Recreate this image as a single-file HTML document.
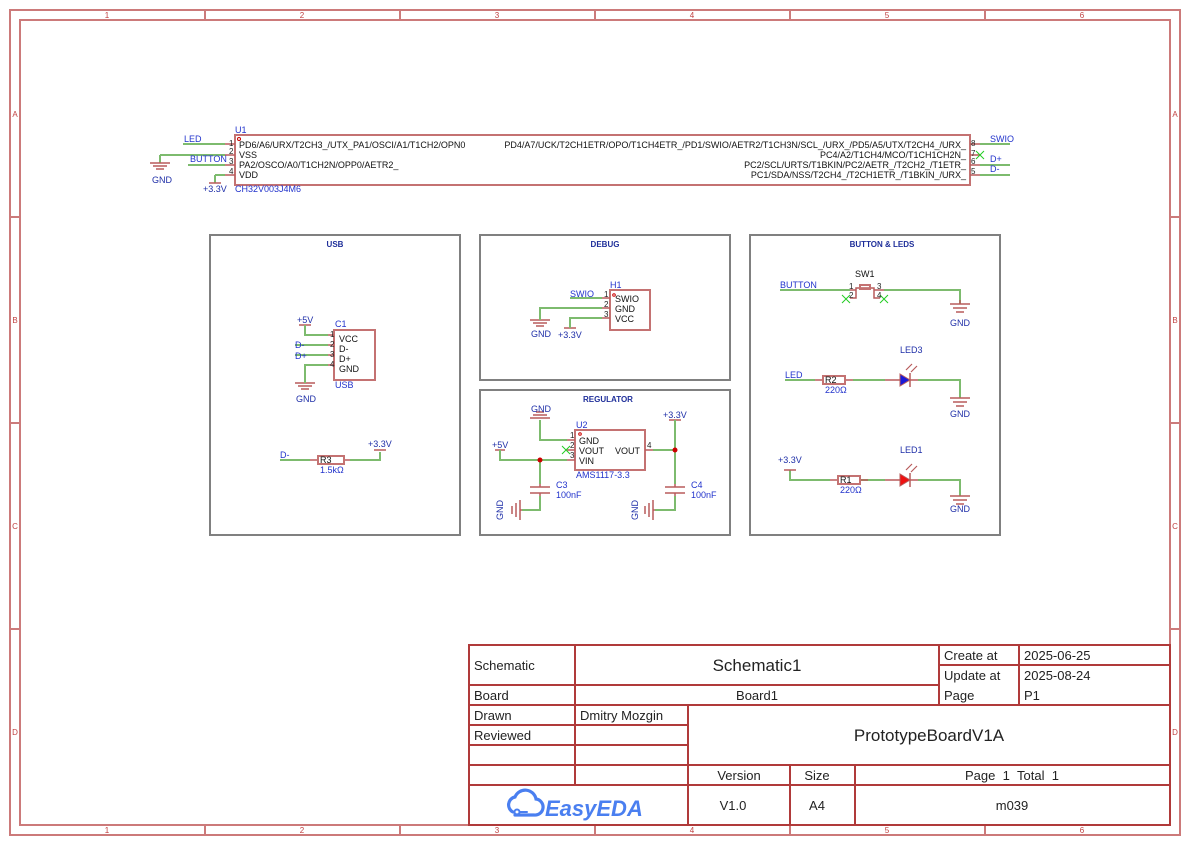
<!DOCTYPE html>
<html><head><meta charset="utf-8"><style>
html,body{margin:0;padding:0;background:#fff}
svg{display:block}
text{font-family:"Liberation Sans",Arial,sans-serif}
.w{stroke:#7dbb6e;stroke-width:2;fill:none}
.p{stroke:#b85c5c;stroke-width:1.5;fill:none}
.b{stroke:#c47272;stroke-width:2;fill:none}
.bl{fill:#2233cc;font-size:9px}
.nl{fill:#1f2fa8;font-size:9px}
.bk{fill:#111;font-size:9px}
.pn{fill:#222;font-size:8px}
.bx{stroke:#808080;stroke-width:2;fill:none}
.tt{fill:#1f2f9a;font-size:8px;font-weight:bold}
.fr{stroke:#cc7a7a;stroke-width:2;fill:none}
.tb{stroke:#b03a3a;stroke-width:2;fill:none}
.tk{fill:#c04040;font-size:8px}
.tbt{fill:#222;font-size:13px}
</style></head><body>
<svg width="1190" height="845" viewBox="0 0 1190 845" xmlns="http://www.w3.org/2000/svg">
<rect x="10" y="10" width="1170" height="825" class="fr"/>
<rect x="20" y="20" width="1150" height="805" class="fr"/>
<g class="fr">
<path d="M205 10V20M400 10V20M595 10V20M790 10V20M985 10V20M205 825V835M400 825V835M595 825V835M790 825V835M985 825V835"/>
<path d="M10 217H20M10 423H20M10 629H20M1170 217H1180M1170 423H1180M1170 629H1180"/>
</g>
<g class="tk" text-anchor="middle">
<text x="107" y="18">1</text><text x="302" y="18">2</text><text x="497" y="18">3</text><text x="692" y="18">4</text><text x="887" y="18">5</text><text x="1082" y="18">6</text>
<text x="107" y="833">1</text><text x="302" y="833">2</text><text x="497" y="833">3</text><text x="692" y="833">4</text><text x="887" y="833">5</text><text x="1082" y="833">6</text>
<text x="15" y="117">A</text><text x="15" y="323">B</text><text x="15" y="529">C</text><text x="15" y="735">D</text>
<text x="1175" y="117">A</text><text x="1175" y="323">B</text><text x="1175" y="529">C</text><text x="1175" y="735">D</text>
</g>

<rect x="235" y="135" width="735" height="50" class="b"/>
<circle cx="239" cy="139" r="1.5" fill="none" stroke="#c00" stroke-width="1"/>
<path class="p" d="M225 144H235M225 155H235M225 165H235M225 175H235M970 144H980M970 155H980M970 165H980M970 175H980"/>
<path class="w" d="M183 144H225M160 155H225M160 155V163M188 165H225M215 175H225M215 175V183M980 144H1010M980 165H1010M980 175H1010"/>
<path class="p" d="M150 163H170M153 166H167M156 169H164M209 183H221"/>
<text class="nl" x="152" y="183">GND</text>
<text class="nl" x="203" y="192">+3.3V</text>
<text class="bl" x="184" y="142">LED</text>
<text class="bl" x="190" y="162">BUTTON</text>
<text class="bl" x="235" y="133">U1</text>
<text class="bl" x="235" y="192">CH32V003J4M6</text>
<g class="pn"><text x="229" y="146">1</text><text x="229" y="154">2</text><text x="229" y="164">3</text><text x="229" y="174">4</text>
<text x="971" y="146">8</text><text x="971" y="156">7</text><text x="971" y="164">6</text><text x="971" y="174">5</text></g>
<g class="bk" font-size="8.3">
<text x="239" y="148">PD6/A6/URX/T2CH3_/UTX_PA1/OSCI/A1/T1CH2/OPN0</text>
<text x="239" y="158">VSS</text>
<text x="239" y="168">PA2/OSCO/A0/T1CH2N/OPP0/AETR2_</text>
<text x="239" y="178">VDD</text>
<g text-anchor="end">
<text x="966" y="148">PD4/A7/UCK/T2CH1ETR/OPO/T1CH4ETR_/PD1/SWIO/AETR2/T1CH3N/SCL_/URX_/PD5/A5/UTX/T2CH4_/URX_</text>
<text x="966" y="158">PC4/A2/T1CH4/MCO/T1CH1CH2N_</text>
<text x="966" y="168">PC2/SCL/URTS/T1BKIN/PC2/AETR_/T2CH2_/T1ETR_</text>
<text x="966" y="178">PC1/SDA/NSS/T2CH4_/T2CH1ETR_/T1BKIN_/URX_</text></g></g>
<path d="M976 151L984 159M984 151L976 159" stroke="#2c2" stroke-width="1"/>
<text class="bl" x="990" y="142">SWIO</text>
<text class="bl" x="990" y="162">D+</text>
<text class="bl" x="990" y="172">D-</text>

<rect x="210" y="235" width="250" height="300" class="bx"/>
<text class="tt" x="335" y="247" text-anchor="middle">USB</text>
<rect x="334" y="330" width="41" height="50" class="b"/>
<path class="p" d="M328 335H334M328 345H334M328 355H334M328 365H334M299 325H311M295 383H315M298 386H312M301 389H309"/>
<path class="w" d="M305 325V335H328M295 345H328M295 355H328M305 383V365H328"/>
<g class="pn"><text x="330" y="337">1</text><text x="330" y="347">2</text><text x="330" y="357">3</text><text x="330" y="367">4</text></g>
<g class="bk"><text x="339" y="342">VCC</text><text x="339" y="352">D-</text><text x="339" y="362">D+</text><text x="339" y="372">GND</text></g>
<text class="bl" x="335" y="327">C1</text><text class="bl" x="335" y="388">USB</text>
<text class="nl" x="297" y="323">+5V</text>
<text class="bl" x="295" y="348">D-</text><text class="bl" x="295" y="359">D+</text>
<text class="nl" x="296" y="402">GND</text>
<path class="w" d="M280 460H310M350 460H380V452"/>
<path class="p" d="M310 460H318M344 460H350M374 450H386"/>
<rect x="318" y="456" width="26" height="8" class="b"/>
<text class="bk" x="320" y="463">R3</text>
<text class="bl" x="320" y="473">1.5kΩ</text>
<text class="bl" x="280" y="458">D-</text>
<text class="nl" x="368" y="447">+3.3V</text>

<rect x="480" y="235" width="250" height="145" class="bx"/>
<text class="tt" x="605" y="247" text-anchor="middle">DEBUG</text>
<rect x="610" y="290" width="40" height="40" class="b"/>
<circle cx="614" cy="295" r="1.3" fill="none" stroke="#c00" stroke-width="1"/>
<path class="p" d="M602 298H610M602 308H610M602 318H610M530 320H550M533 323H547M536 326H544M564 328H576"/>
<path class="w" d="M570 298H602M540 320V308H602M570 328V318H602"/>
<g class="pn"><text x="604" y="297">1</text><text x="604" y="307">2</text><text x="604" y="317">3</text></g>
<g class="bk"><text x="615" y="302">SWIO</text><text x="615" y="312">GND</text><text x="615" y="322">VCC</text></g>
<text class="bl" x="610" y="288">H1</text>
<text class="bl" x="570" y="297">SWIO</text>
<text class="nl" x="531" y="337">GND</text>
<text class="nl" x="558" y="338">+3.3V</text>

<rect x="480" y="390" width="250" height="145" class="bx"/>
<text class="tt" x="608" y="402" text-anchor="middle">REGULATOR</text>
<rect x="575" y="430" width="70" height="40" class="b"/>
<circle cx="580" cy="434" r="1.3" fill="none" stroke="#c00" stroke-width="1"/>
<path class="p" d="M567 440H575M567 450H575M567 460H575M645 450H653M530 418H550M533 415H547M536 412H544M495 450H505M669 420H681"/>
<path class="w" d="M540 420V440H567M500 450V460H567M540 460V484M540 496V510H522M653 450H675M675 420V484M675 496V510H655"/>
<path class="p" d="M530 487H550M530 493H550M665 487H685M665 493H685M540 484V487M540 493V496M675 484V487M675 493V496"/>
<path class="p" d="M520 500V520M516 503V517M512 506V514M520 510H522M653 500V520M649 503V517M645 506V514M653 510H655"/>
<circle cx="540" cy="460" r="2.5" fill="#c00"/>
<circle cx="675" cy="450" r="2.5" fill="#c00"/>
<path d="M562 446L570 454M570 446L562 454" stroke="#2c2" stroke-width="1"/>
<g class="pn"><text x="570" y="438">1</text><text x="570" y="448">2</text><text x="570" y="458">3</text><text x="647" y="448">4</text></g>
<g class="bk"><text x="579" y="444">GND</text><text x="579" y="454">VOUT</text><text x="579" y="464">VIN</text><text x="615" y="454">VOUT</text></g>
<text class="bl" x="576" y="428">U2</text>
<text class="bl" x="576" y="478">AMS1117-3.3</text>
<text class="nl" x="531" y="412">GND</text>
<text class="nl" x="492" y="448">+5V</text>
<text class="nl" x="663" y="418">+3.3V</text>
<text class="bl" x="556" y="488">C3</text><text class="bl" x="556" y="498">100nF</text>
<text class="bl" x="691" y="488">C4</text><text class="bl" x="691" y="498">100nF</text>
<text class="nl" transform="translate(503,520) rotate(-90)">GND</text>
<text class="nl" transform="translate(638,520) rotate(-90)">GND</text>

<rect x="750" y="235" width="250" height="300" class="bx"/>
<text class="tt" x="882" y="247" text-anchor="middle">BUTTON &amp; LEDS</text>
<path class="w" d="M780 290H850M884 290H960V304"/>
<path class="p" d="M850 290H856M856 290V298H850M856 290V288H874V290M874 290V298H880M874 290H884M950 304H970M953 308H967M956 312H964M960 304V300"/>
<rect x="860" y="285" width="10" height="4" class="b" stroke-width="1.2"/>
<path d="M842 295L850 303M850 295L842 303M880 295L888 303M888 295L880 303" stroke="#2c2" stroke-width="1"/>
<g class="pn"><text x="849" y="289">1</text><text x="849" y="298">2</text><text x="877" y="289">3</text><text x="877" y="298">4</text></g>
<text class="bk" x="855" y="277">SW1</text>
<text class="bl" x="780" y="288">BUTTON</text>
<text class="nl" x="950" y="326">GND</text>

<path class="w" d="M785 380H815M853 380H885M918 380H960V398"/>
<path class="p" d="M815 380H823M845 380H853M885 380H900M910 380H918M950 398H970M953 402H967M956 406H964"/>
<rect x="823" y="376" width="22" height="8" class="b"/>
<path d="M900 374V386L910 380Z" fill="#1a1ad8" stroke="#b85c5c" stroke-width="1"/>
<path d="M910 373V387" class="p"/>
<path d="M906 370L912 364M911 372L917 366" stroke="#b85c5c" stroke-width="1.2"/>
<text class="bk" x="825" y="383">R2</text>
<text class="bl" x="825" y="393">220Ω</text>
<text class="bl" x="785" y="378">LED</text>
<text class="nl" x="900" y="353">LED3</text>
<text class="nl" x="950" y="417">GND</text>

<path class="w" d="M790 470V480H830M860 480H885M918 480H960V496"/>
<path class="p" d="M784 470H796M830 480H838M860 480H868M885 480H900M910 480H918M950 496H970M953 500H967M956 504H964"/>
<rect x="838" y="476" width="22" height="8" class="b"/>
<path d="M900 474V486L910 480Z" fill="#ee1111" stroke="#b85c5c" stroke-width="1"/>
<path d="M910 473V487" class="p"/>
<path d="M906 470L912 464M911 472L917 466" stroke="#b85c5c" stroke-width="1.2"/>
<text class="bk" x="840" y="483">R1</text>
<text class="bl" x="840" y="493">220Ω</text>
<text class="nl" x="778" y="463">+3.3V</text>
<text class="nl" x="900" y="453">LED1</text>
<text class="nl" x="950" y="512">GND</text>

<g class="tb">
<rect x="469" y="645" width="701" height="180"/>
<path d="M469 685H939M939 665H1170M469 705H1170M469 725H688M469 745H688M469 765H1170M469 785H1170"/>
<path d="M575 645V785M939 645V705M1019 645V705M688 705V825M790 765V825M855 765V825"/>
</g>
<g class="tbt">
<text x="474" y="670">Schematic</text>
<text x="474" y="700">Board</text>
<text x="474" y="720">Drawn</text>
<text x="474" y="740">Reviewed</text>
<text x="580" y="720">Dmitry Mozgin</text>
<text x="944" y="660">Create at</text>
<text x="944" y="680">Update at</text>
<text x="944" y="700">Page</text>
<text x="1024" y="660">2025-06-25</text>
<text x="1024" y="680">2025-08-24</text>
<text x="1024" y="700">P1</text>
<g text-anchor="middle">
<text x="757" y="671" font-size="17">Schematic1</text>
<text x="757" y="700">Board1</text>
<text x="929" y="741" font-size="17">PrototypeBoardV1A</text>
<text x="739" y="780">Version</text>
<text x="817" y="780">Size</text>
<text x="1012" y="780">Page&#160;&#160;1&#160;&#160;Total&#160;&#160;1</text>
<text x="733" y="810">V1.0</text>
<text x="817" y="810">A4</text>
<text x="1012" y="810">m039</text>
</g></g>
<g fill="none" stroke="#4a7ff0" stroke-width="3.2" stroke-linecap="round">
<path d="M515 815H534A8 8 0 0 0 536 799A11 11 0 0 0 515 797A8 8 0 0 0 513 812"/>
<circle cx="517" cy="812" r="2.5" stroke-width="2"/>
<path d="M520 812H527" stroke-width="2"/>
</g>
<text x="545" y="816" font-size="22" font-weight="bold" font-style="italic" fill="#4a7ff0">EasyEDA</text>
</svg>
</body></html>
